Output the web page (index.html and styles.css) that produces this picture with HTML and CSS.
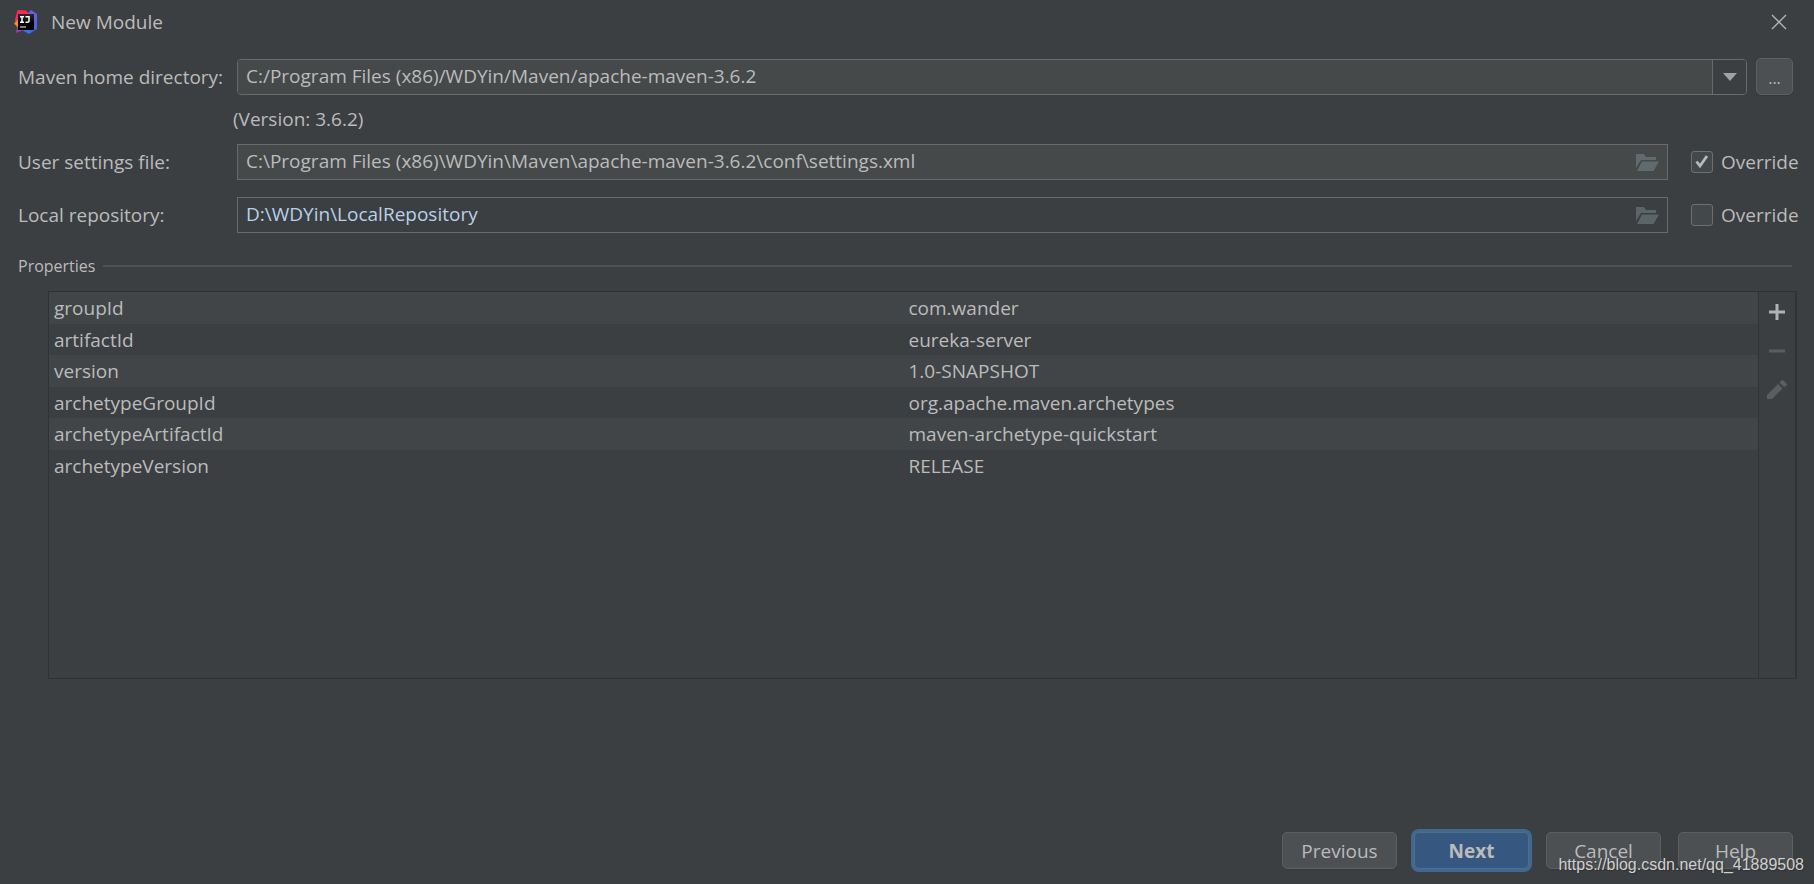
FILE: index.html
```html
<!DOCTYPE html>
<html lang="en">
<head>
<meta charset="utf-8">
<title>New Module</title>
<link rel="stylesheet" href="styles.css">
</head>
<body>
<div class="dialog">
  <header class="titlebar">
    <svg class="logo" viewBox="0 0 24 24" aria-hidden="true">
      <defs>
        <linearGradient id="red" x1="0" y1="0" x2="0" y2="1"><stop offset="0" stop-color="#ff2452"/><stop offset=".5" stop-color="#f02f78"/><stop offset="1" stop-color="#8a3fd0"/></linearGradient>
        <linearGradient id="blue" x1="1" y1="0" x2="0" y2="1"><stop offset="0" stop-color="#7a5be8"/><stop offset=".5" stop-color="#3f68e8"/><stop offset="1" stop-color="#3478f0"/></linearGradient>
        <linearGradient id="ink" x1="0" y1="0" x2="0" y2="1"><stop offset="0" stop-color="#2a2a2a"/><stop offset=".6" stop-color="#000"/></linearGradient>
      </defs>
      <path d="M12 5 17 0l6 4v15l-8 5-7-4z" fill="url(#blue)"/>
      <path d="M3.500 0 12 .500l4 4.500v12l-9 4-5 2 1-5-2-8z" fill="url(#red)"/>
      <path d="M4 9.500 0 13.500l4 4z" fill="#fb8a1e"/>
      <rect x="4" y="4" width="16" height="16" fill="url(#ink)"/>
      <path d="M6 6.700h4M8 6.700v5.600M6 12.300h4M11.500 6.700H15v4.300q0 1.300-1.700 1.300h-1.800" fill="none" stroke="#fff" stroke-width="1.500"/>
      <path d="M6 17h6" stroke="#d0d0d0" stroke-width="1.200"/>
    </svg>
    <h1 class="title">New Module</h1>
    <button class="close" type="button" aria-label="Close">
      <svg viewBox="0 0 16 16" width="16" height="16"><path d="M1 1l14 14M15 1 1 15" stroke="#b4b6b7" stroke-width="1.300" fill="none"/></svg>
    </button>
  </header>

  <main class="content">
    <div class="form">
      <label class="caption" for="home">Maven home directory:</label>
      <div class="controls controls-home">
        <div class="combo">
          <select id="home"><option>C:/Program Files (x86)/WDYin/Maven/apache-maven-3.6.2</option></select>
          <span class="combo-arrow"><svg viewBox="0 0 14 8" width="14" height="8"><path d="M0 0h14L7 8z" fill="#9fa3a5"/></svg></span>
        </div>
        <button class="btn browse" type="button">...</button>
      </div>

      <p class="version">(Version: 3.6.2)</p>

      <label class="caption" for="settings">User settings file:</label>
      <div class="controls">
        <div class="field">
          <input id="settings" type="text" value="C:\Program Files (x86)\WDYin\Maven\apache-maven-3.6.2\conf\settings.xml">
          <button class="folder" type="button" aria-label="Browse settings file"><svg viewBox="0 0 23 17" width="23" height="17"><path d="M0 0h8l2 3h10v3H5L0 14z M6 7.500h17L17.500 17H1z" fill="#616a6e"/></svg></button>
        </div>
        <label class="check"><span class="box"><input type="checkbox" checked><svg viewBox="0 0 22 22"><path d="M5.500 10.500 9 15 16 5" fill="none" stroke="#b8babb" stroke-width="2.800"/></svg></span>Override</label>
      </div>

      <label class="caption" for="repo">Local repository:</label>
      <div class="controls">
        <div class="field field-plain">
          <input id="repo" type="text" value="D:\WDYin\LocalRepository">
          <button class="folder" type="button" aria-label="Browse repository"><svg viewBox="0 0 23 17" width="23" height="17"><path d="M0 0h8l2 3h10v3H5L0 14z M6 7.500h17L17.500 17H1z" fill="#5b6467"/></svg></button>
        </div>
        <label class="check"><span class="box"><input type="checkbox"><svg viewBox="0 0 22 22"><path d="M5.500 10.500 9 15 16 5" fill="none" stroke="#b8babb" stroke-width="2.800"/></svg></span>Override</label>
      </div>
    </div>

    <h2 class="section">Properties</h2>

    <div class="properties">
      <div class="rows">
        <table>
          <tbody>
            <tr><td>groupId</td><td>com.wander</td></tr>
            <tr><td>artifactId</td><td>eureka-server</td></tr>
            <tr><td>version</td><td>1.0-SNAPSHOT</td></tr>
            <tr><td>archetypeGroupId</td><td>org.apache.maven.archetypes</td></tr>
            <tr><td>archetypeArtifactId</td><td>maven-archetype-quickstart</td></tr>
            <tr><td>archetypeVersion</td><td>RELEASE</td></tr>
          </tbody>
        </table>
      </div>
      <div class="tools">
        <button type="button" aria-label="Add"><svg viewBox="0 0 20 20" width="20" height="20"><path d="M2 10h16M10 2v16" stroke="#afb1b3" stroke-width="3"/></svg></button>
        <button type="button" aria-label="Remove"><svg viewBox="0 0 20 20" width="20" height="20"><path d="M2 10h16" stroke="#5b5d5f" stroke-width="3"/></svg></button>
        <button type="button" aria-label="Edit"><svg viewBox="0 0 20 20" width="20" height="20"><path d="M0 15 11 4l4.500 4.500L5 19H0z M12.500 2.500 14.500.500q1-.8 2 0l3 3q1 1 0 2L17 7z" fill="#5d5d5d"/></svg></button>
      </div>
    </div>
  </main>

  <footer class="actions">
    <button class="btn" type="button">Previous</button>
    <button class="btn primary" type="button">Next</button>
    <button class="btn" type="button">Cancel</button>
    <button class="btn" type="button">Help</button>
  </footer>
  <span class="watermark">https://blog.csdn.net/qq_41889508</span>
</div>
</body>
</html>
```
FILE: styles.css
```css
* { box-sizing: border-box; }

body {
  margin: 0;
  background: #3c3f41;
  color: #bbbbbb;
  font: 19px/24px "Open Sans", "Noto Sans", sans-serif;
}

button, input, select { font: inherit; color: inherit; margin: 0; }
h1, h2, p { margin: 0; font-weight: 400; }
svg { display: block; }

.dialog {
  position: relative;
  display: flex;
  flex-direction: column;
  min-height: 100vh;
}

.titlebar {
  display: flex;
  align-items: center;
  height: 43px;
  padding: 0 23px 0 14px;
}
.logo { width: 24px; height: 24px; }
.title { flex: 1; margin-left: 13px; font-size: 19px; }
.close { padding: 4px; border: 0; background: none; }

.content { padding: 15px 17px 0 18px; }

.form {
  display: grid;
  grid-template-columns: 215px 1fr;
  align-items: center;
}
.caption { white-space: nowrap; }
.controls { display: flex; align-items: center; padding-left: 4px; margin-bottom: 17px; }
.form .caption { margin-bottom: 17px; }
.form .caption:first-child, .controls-home { margin-bottom: 12px; }
.controls-home { gap: 9px; padding-right: 4px; }
.version { grid-column: 2; margin-bottom: 13px; }

.combo {
  position: relative;
  flex: 1;
  height: 36px;
  border: 1px solid #6a6a6a;
  border-radius: 4px;
  overflow: hidden;
}
.combo select {
  appearance: none;
  width: 100%;
  height: 100%;
  padding: 0 40px 2px 8px;
  border: 0;
  background: #45494a;
}
.combo-arrow {
  position: absolute;
  top: 0;
  right: 0;
  bottom: 0;
  display: flex;
  align-items: center;
  justify-content: center;
  width: 34px;
  border-left: 1px solid #6a6a6a;
  background: #3c3f41;
  pointer-events: none;
}

.field {
  display: flex;
  flex: 1;
  align-items: center;
  height: 36px;
  border: 1px solid #6a6a6a;
  background: #45494a;
}
.field input {
  flex: 1;
  min-width: 0;
  height: 100%;
  padding: 0 8px 2px;
  border: 0;
  background: none;
}
.field-plain { background: #3c3f41; color: #b8d0ea; }
.folder { padding: 0 8px; border: 0; background: none; }

.check { display: flex; align-items: center; gap: 8px; width: 106px; margin-left: 23px; white-space: nowrap; }
.box { position: relative; flex: none; width: 22px; height: 22px; }
.box input {
  appearance: none;
  display: block;
  width: 22px;
  height: 22px;
  border: 1px solid #6f6f6f;
  border-radius: 3px;
  background: #43494a;
}
.box svg { position: absolute; inset: 0; display: none; pointer-events: none; }
.box input:checked + svg { display: block; }

.section {
  display: flex;
  align-items: center;
  gap: 8px;
  margin: 4px 5px 13px 0;
  font-size: 16px;
}
.section::after { content: ""; flex: 1; height: 2px; background: #515151; }

.properties {
  display: flex;
  height: 388px;
  margin-left: 30px;
  border: 1px solid #323232;
  border-right-width: 2px;
}
.rows { flex: 1; }
.rows table { width: 100%; border-collapse: collapse; table-layout: fixed; }
.rows td { height: 31px; padding: 0 5px; }
.rows tr:nth-child(odd) td { height: 32px; background: #414547; }
.tools {
  display: flex;
  flex-direction: column;
  align-items: center;
  gap: 19px;
  width: 37px;
  padding-top: 10px;
  border-left: 1px solid #323232;
}
.tools button { padding: 0; border: 0; background: none; }

.actions {
  display: flex;
  justify-content: flex-end;
  gap: 17px;
  margin-top: auto;
  padding: 20px 21px 15px;
}
.btn {
  width: 115px;
  height: 37px;
  padding: 0;
  border: 1px solid #5e6060;
  border-radius: 5px;
  background: #4c5052;
  box-shadow: 0 1px 1px #353839;
}
.browse { width: 37px; padding-top: 2px; font-size: 16px; }
.primary {
  border-color: #4c708c;
  background: #365880;
  box-shadow: 0 0 0 3px #43688f;
  font-weight: 700;
}

.watermark {
  position: absolute;
  right: 10px;
  bottom: 8px;
  color: #d0d0d0;
  font: 16px/22px "Liberation Sans", Arial, sans-serif;
  text-shadow: 1px 1px 1px #303234;
  pointer-events: none;
}
```
